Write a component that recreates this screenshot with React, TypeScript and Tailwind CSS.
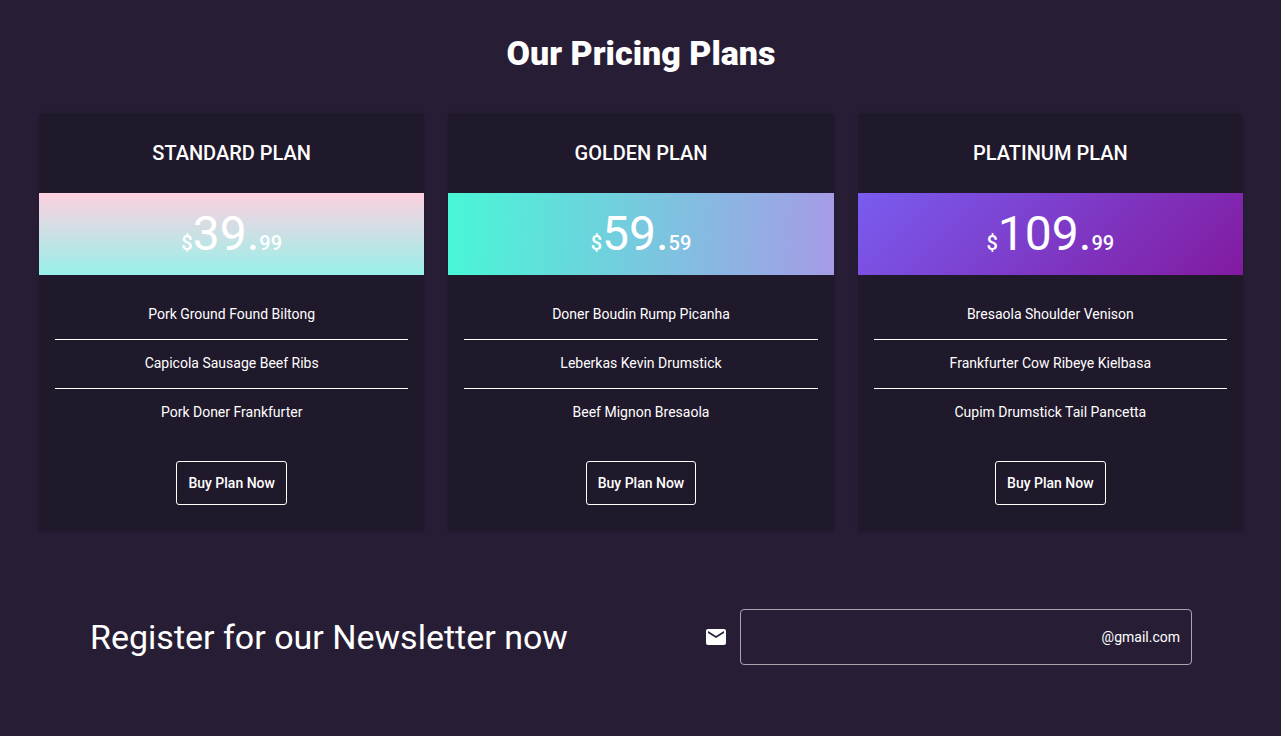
import React from "react";

type Plan = {
  name: string;
  whole: string;
  cents: string;
  gradient: string;
  features: string[];
};

const plans: Plan[] = [
  {
    name: "STANDARD PLAN",
    whole: "39.",
    cents: "99",
    gradient: "bg-[linear-gradient(to_bottom,#fed0e1,#98f0e8)]",
    features: ["Pork Ground Found Biltong", "Capicola Sausage Beef Ribs", "Pork Doner Frankfurter"],
  },
  {
    name: "GOLDEN PLAN",
    whole: "59.",
    cents: "59",
    gradient: "bg-[linear-gradient(92deg,#48f7d6,#a69be7)]",
    features: ["Doner Boudin Rump Picanha", "Leberkas Kevin Drumstick", "Beef Mignon Bresaola"],
  },
  {
    name: "PLATINUM PLAN",
    whole: "109.",
    cents: "99",
    gradient: "bg-[linear-gradient(135deg,#795cf0,#821aa0)]",
    features: ["Bresaola Shoulder Venison", "Frankfurter Cow Ribeye Kielbasa", "Cupim Drumstick Tail Pancetta"],
  },
];

function PlanCard({ plan }: { plan: Plan }) {
  return (
    <article className="rounded bg-[#20182b] text-center shadow-[0_1px_3px_rgba(0,0,0,0.2)]">
      <h2 className="flex h-20 items-center justify-center text-xl font-medium">{plan.name}</h2>
      <p className={`flex h-[82px] items-baseline justify-center pt-[9px] text-xl font-medium ${plan.gradient}`}>
        <span>$</span>
        <span className="text-5xl leading-16 font-normal">{plan.whole}</span>
        <span>{plan.cents}</span>
      </p>
      <ul className="divide-y divide-white p-4 text-sm">
        {plan.features.map((feature) => (
          <li key={feature} className="box-content flex h-[46px] items-center justify-center pb-0.5">
            {feature}
          </li>
        ))}
      </ul>
      <div className="px-4 pt-2 pb-[26px]">
        <button type="button" className="h-11 rounded-[3px] border border-white px-[11px] text-sm font-medium">
          Buy Plan Now
        </button>
      </div>
    </article>
  );
}

function Newsletter() {
  return (
    <section className="mt-[78px] flex flex-wrap items-center justify-between gap-x-8 gap-y-6 px-[51px]">
      <h2 className="text-[34px] leading-10">Register for our Newsletter now</h2>
      <form className="flex w-full max-w-[488px] items-center gap-3" onSubmit={(e) => e.preventDefault()}>
        <svg viewBox="0 0 24 24" className="size-6 shrink-0 fill-white" aria-hidden="true">
          <path d="M20,8L12,13L4,8V6L12,11L20,6M20,4H4C2.89,4 2,4.89 2,6V18A2,2 0 0,0 4,20H20A2,2 0 0,0 22,18V6C22,4.89 21.1,4 20,4Z" />
        </svg>
        <label className="flex h-14 min-w-0 flex-1 items-center rounded border border-[#a9a5af] px-[11px] text-sm">
          <input type="text" aria-label="Email" className="h-full min-w-0 flex-1 bg-transparent outline-none" />
          <span>@gmail.com</span>
        </label>
      </form>
    </section>
  );
}

export default function App() {
  return (
    <main className="min-h-screen bg-[#271e36] pt-[33px] pr-[38px] pb-16 pl-[39px] font-['Roboto',sans-serif] text-white">
      <h1 className="text-center text-[34px] leading-10 font-black">Our Pricing Plans</h1>
      <section className="mt-10 grid grid-cols-1 gap-6 md:grid-cols-3">
        {plans.map((plan) => (
          <PlanCard key={plan.name} plan={plan} />
        ))}
      </section>
      <Newsletter />
    </main>
  );
}
